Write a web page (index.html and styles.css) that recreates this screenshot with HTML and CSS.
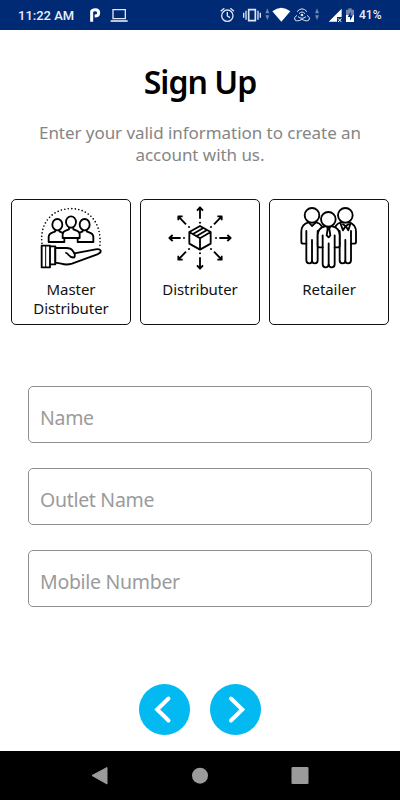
FILE: index.html
```html
<!DOCTYPE html>
<html lang="en">
<head>
    <meta charset="UTF-8">
    <meta name="viewport" content="width=device-width, initial-scale=1.0">
    <title>Sign Up</title>
    <link rel="stylesheet" href="styles.css">
</head>
<body>
<div class="phone">
    <!-- status bar -->
    <div class="status">
        <span class="time">11:22 AM</span>
        <svg class="parking" width="16" height="30" viewBox="261 0 48 90">
            <path d="M275 65V34q2-5 11-5 10 0 10 9 0 10-12 10" fill="none" stroke="#fff" stroke-width="9"/>
        </svg>
        <svg class="laptop" width="18" height="30" viewBox="331 0 54 90">
            <path d="M340 29h37v27h-37z" fill="none" stroke="#dfe6f5" stroke-width="4"/>
            <path d="M333 63h51" stroke="#dfe6f5" stroke-width="5"/>
        </svg>
        <div class="tray">
            <svg class="alarm" width="18" height="30" viewBox="57 0 54 90">
                <g fill="none" stroke="#dfe6f5" stroke-width="4">
                    <circle cx="82" cy="47" r="17"/>
                    <path d="M82 36v12l8 5M62 34l11-9M102 34l-11-9"/>
                </g>
            </svg>
            <svg class="vibrate" width="20" height="30" viewBox="126 0 60 90">
                <path d="M146 29h20v33h-20z" fill="none" stroke="#dfe6f5" stroke-width="5"/>
                <path d="M138 32v27M174 32v27M131 38v15M181 38v15" stroke="#dfe6f5" stroke-width="4"/>
            </svg>
            <svg class="updown" width="7" height="30" viewBox="192 0 21 90">
                <path d="M196 40l6-15 6 15zM196 46l6 14 6-14z" fill="#7183b0"/>
            </svg>
            <svg class="wifi" width="20" height="30" viewBox="216 0 60 90">
                <path d="M217 34q27-21 54 0l-27 31z" fill="#fff"/>
            </svg>
            <svg class="hotspot" width="18" height="30" viewBox="279 0 54 90">
                <g fill="none" stroke="#dfe6f5" stroke-width="3">
                    <path d="M291 35q15-17 30 0M297 41q9-10 18 0"/>
                    <path d="M291 46q-12 7-6 14 7 6 21-2 14 8 21 2 6-7-6-14M294 50q12 10 24 0"/>
                </g>
                <circle cx="306" cy="45" r="4" fill="#dfe6f5"/>
            </svg>
            <svg class="updown2" width="6" height="30" viewBox="342 0 18 90">
                <path d="M345 40l6-15 6 15zM345 46l6 14 6-14z" fill="#7183b0"/>
            </svg>
            <svg class="signal" width="15" height="30" viewBox="384 0 45 90">
                <path d="M386 65l39-39v25h-14v14z" fill="#fff"/>
                <path d="M414 55l10 11M424 55l-10 11" stroke="#fff" stroke-width="3"/>
            </svg>
            <svg class="battery" width="10" height="30" viewBox="435 0 30 90">
                <path d="M438 29h7v-4h10v4h7v18h-24z" fill="#7183b0"/>
                <path d="M438 45h24v21h-24z" fill="#fff"/>
                <path d="M452 35l-9 16h7v11l9-16h-7z" fill="#002a74"/>
            </svg>
            <span class="percent">41%</span>
        </div>
    </div>

    <div class="main">
        <h1 class="title">Sign Up</h1>
        <p class="intro">Enter your valid information to create an<br>account with us.</p>

        <div class="roles">
            <button type="button" class="role">
                <svg width="64" height="64" viewBox="102 48 192 192">
                    <path d="M111 160C103 99 143 56 198 56S293 99 284 174" fill="none" stroke="#000" stroke-width="5" stroke-linecap="round" stroke-dasharray="0 10.5"/>
                    <g fill="#fff" stroke="#000" stroke-width="5.5" stroke-linejoin="round">
                        <path d="M131 156v-16q1-9 11-12l9-4v-5h12v5l15 7v25zM265 156v-16q-1-9-11-12l-9-4v-5h-12v5l-15 7v25z"/>
                        <ellipse cx="157" cy="104" rx="15" ry="17"/>
                        <ellipse cx="239" cy="104" rx="15" ry="17"/>
                        <path d="M173 144v-12q1-7 9-10l10-4v-6h13v6l10 4q8 3 9 10v12z"/>
                        <ellipse cx="198" cy="96" rx="15" ry="17"/>
                        <path d="M110 167h25v65h-25zM135 169h16v54h-16z"/>
                        <path d="M151 174h34q12 0 17 7l6 9 64-12q14-2 15 5 1 6-10 10l-76 28q-17 5-32 0l-18-3z"/>
                        <path d="M181 188q6 1 10 7 7 9 17 7 3-6 0-13" fill="none"/>
                    </g>
                    <path d="M122 167v65" stroke="#000" stroke-width="3"/>
                </svg>
                <span>Master<br>Distributer</span>
            </button>
            <button type="button" class="role">
                <svg width="64" height="64" viewBox="99 48 192 192">
                    <g fill="none" stroke="#000" stroke-width="5.5" stroke-linejoin="round">
                        <path d="M195 108l32 18v35l-32 18-32-18v-35zM163 126l32 19 32-19M195 145v34M174 132l31-18M185 138l31-18"/>
                        <path d="M195 86V53M186 62l9-10 9 10M195 202v33M186 226l9 10 9-10"/>
                        <path d="M137 144h-33M113 135l-10 9 10 9M253 144h33M277 135l10 9-10 9"/>
                        <path d="M153 103l-23-24M130 91V79h13M237 103l23-24M260 91V79h-13"/>
                        <path d="M153 185l-23 24M130 197v12h13M237 185l23 24M260 197v12h-13"/>
                    </g>
                    <g>
                        <circle cx="195" cy="98" r="3"/><circle cx="195" cy="190" r="3"/>
                        <circle cx="147" cy="144" r="3"/><circle cx="243" cy="144" r="3"/>
                        <circle cx="162" cy="111" r="3"/><circle cx="228" cy="111" r="3"/>
                        <circle cx="162" cy="177" r="3"/><circle cx="228" cy="177" r="3"/>
                    </g>
                </svg>
                <span>Distributer</span>
            </button>
            <button type="button" class="role">
                <svg width="64" height="64" viewBox="96 48 192 192">
                    <g fill="#fff" stroke="#000" stroke-width="5.5" stroke-linejoin="round" stroke-linecap="round">
                        <path d="M130 97q-21 6-21 28v31q0 5 6 5h9v50q0 9 9 9 8 0 8-8 0 8 9 8 8 0 8-9v-51h12V108q-6-9-16-11z"/>
                        <path d="M124 123v38M141 150v61M158 123v37M132 98l9 10 11-10" fill="none"/>
                        <circle cx="141" cy="76" r="22"/>
                        <path d="M252 97q21 6 21 28v31q0 5-6 5h-9v50q0 9-9 9-8 0-8-8 0 8-9 8-8 0-8-9v-51h-12V108q6-9 16-11z"/>
                        <path d="M258 123v38M241 150v61M224 123v37M226 99l8 22 8-13 8 13 7-22M234 103l8 6 8-6" fill="none"/>
                        <circle cx="241" cy="76" r="22"/>
                        <path d="M180 109q-22 5-22 27v31q0 5 6 5h9v51q0 9 9 9 8 0 9-8 1 8 9 8 9 0 9-9v-51h9q6 0 6-5v-31q0-22-22-27z"/>
                        <path d="M173 136v36M191 160v64M209 136v36" fill="none"/>
                        <path d="M187 111h8l-2 6 3 19-5 6-6-6 3-19z"/>
                        <circle cx="190" cy="88" r="22"/>
                    </g>
                </svg>
                <span>Retailer</span>
            </button>
        </div>

        <form class="fields">
            <input type="text" placeholder="Name">
            <input type="text" placeholder="Outlet Name">
            <input type="text" placeholder="Mobile Number">
        </form>

        <div class="arrows">
            <button type="button" class="arrow">
                <svg width="51" height="51" viewBox="0 0 51 51"><path d="M29.5 14.5L18.2 25.5 29.5 36.5" fill="none" stroke="#fff" stroke-width="4" stroke-linecap="round"/></svg>
            </button>
            <button type="button" class="arrow">
                <svg width="51" height="51" viewBox="0 0 51 51"><path d="M21 14.5L32.3 25.5 21 36.5" fill="none" stroke="#fff" stroke-width="4" stroke-linecap="round"/></svg>
            </button>
        </div>
    </div>

    <!-- android buttons -->
    <div class="nav">
        <svg width="18" height="20" viewBox="0 0 18 20"><path d="M1 9.5L16 1.5v16.5z" fill="#9b9b9b" stroke="#9b9b9b" stroke-linejoin="round"/></svg>
        <svg width="18" height="20" viewBox="0 0 18 20"><circle cx="9" cy="9.7" r="8" fill="#9b9b9b"/></svg>
        <svg width="18" height="20" viewBox="0 0 18 20"><rect x="0.5" y="1" width="17" height="17" rx="1" fill="#9b9b9b"/></svg>
    </div>
</div>
</body>
</html>
```
FILE: styles.css
```css
* {
    margin: 0;
    padding: 0;
    box-sizing: border-box;
}

body {
    font-family: "Noto Sans", sans-serif;
    background: #fff;
}

svg {
    display: block;
    flex: none;
}

.phone {
    width: 400px;
    height: 800px;
    display: flex;
    flex-direction: column;
    overflow: hidden;
}

.status {
    height: 30px;
    flex: none;
    display: flex;
    align-items: center;
    padding: 0 17px 0 18px;
    background: #002a74;
    color: #e9eefa;
    font-family: Roboto, sans-serif;
    font-weight: 500;
    white-space: nowrap;
}

.time {
    width: 69px;
    font-size: 13px;
    line-height: 30px;
    padding-top: 1px;
}

.laptop {
    margin-left: 7px;
}

.tray {
    flex: 1;
    display: flex;
    justify-content: flex-end;
}

.vibrate {
    margin-left: 5px;
}

.updown {
    margin-left: 2px;
}

.wifi,
.hotspot {
    margin-left: 1px;
}

.updown2 {
    margin-left: 3px;
}

.signal {
    margin-left: 8px;
}

.battery {
    margin-left: 2px;
}

.percent {
    width: 24px;
    margin-left: 4px;
    font-size: 12px;
    line-height: 31px;
}

.main {
    flex: 1;
    display: flex;
    flex-direction: column;
    align-items: center;
}

.title {
    margin-top: 30px;
    font-size: 32px;
    line-height: 44px;
    font-weight: 600;
    letter-spacing: -0.95px;
    color: #000;
}

.intro {
    margin-top: 18px;
    font-size: 17px;
    line-height: 21.5px;
    letter-spacing: -0.05px;
    text-align: center;
    white-space: nowrap;
    color: #858585;
}

.roles {
    display: flex;
    gap: 9px;
    margin-top: 34px;
}

.role {
    width: 120px;
    height: 126px;
    padding-top: 6px;
    display: flex;
    flex-direction: column;
    align-items: center;
    background: #fff;
    border: 1.5px solid #111;
    border-radius: 5px;
    font-family: inherit;
    font-size: 15px;
    line-height: 18.5px;
    letter-spacing: -0.05px;
    color: #111;
}

.role span {
    margin-top: 10px;
}

.fields {
    display: flex;
    flex-direction: column;
    gap: 25px;
    margin-top: 61px;
}

.fields input {
    width: 344px;
    height: 57px;
    padding: 5px 11px 0;
    border: 1px solid #8f8f8f;
    border-radius: 5px;
    font-family: inherit;
    font-size: 19.5px;
    letter-spacing: -0.3px;
}

.fields input::placeholder {
    color: #9b9b9b;
}

.arrows {
    display: flex;
    gap: 20px;
    margin-top: 77px;
}

.arrow {
    width: 51px;
    height: 51px;
    border: 0;
    border-radius: 50%;
    background: #03b9f1;
}

.nav {
    height: 49px;
    flex: none;
    display: flex;
    justify-content: center;
    align-items: center;
    gap: 82px;
    background: #000;
}
```
